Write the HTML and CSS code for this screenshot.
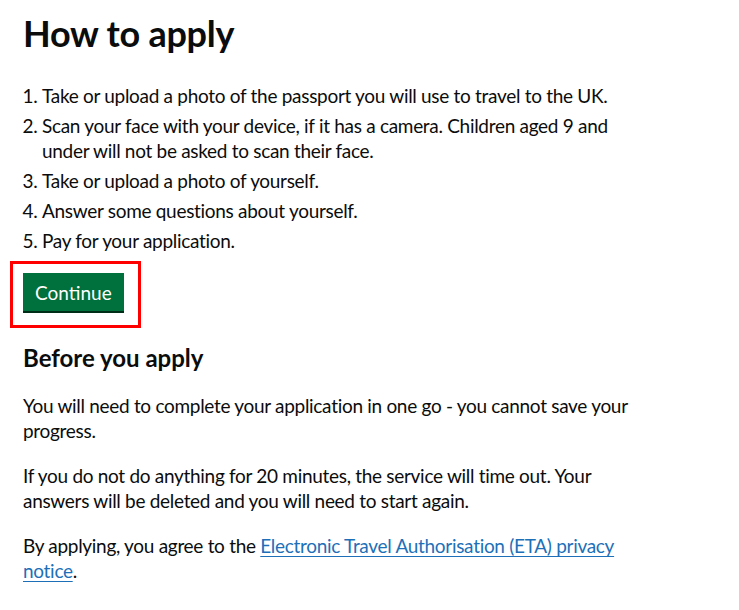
FILE: index.html
```html
<!DOCTYPE html>
<html lang="en">
<head>
<meta charset="utf-8">
<title>How to apply</title>
<link rel="stylesheet" href="styles.css">
</head>
<body>
<main class="page">
  <h1 class="heading-xl">How to apply</h1>
  <ol class="steps">
    <li>Take or upload a photo of the passport you will use to travel to the UK.</li>
    <li>Scan your face with your device, if it has a camera. Children aged 9 and under will not be asked to scan their face.</li>
    <li>Take or upload a photo of yourself.</li>
    <li>Answer some questions about yourself.</li>
    <li>Pay for your application.</li>
  </ol>
  <div class="highlight">
    <button class="button" type="button">Continue</button>
  </div>
  <h2 class="heading-m">Before you apply</h2>
  <p class="body">You will need to complete your application in one go - you cannot save your progress.</p>
  <p class="body">If you do not do anything for 20 minutes, the service will time out. Your answers will be deleted and you will need to start again.</p>
  <p class="body">By applying, you agree to the <a class="link" href="#">Electronic Travel Authorisation (ETA) privacy notice</a>.</p>
</main>
</body>
</html>
```

FILE: styles.css
```css
html, body {
  margin: 0;
  padding: 0;
  background: #ffffff;
}
body {
  font-family: Lato, "Liberation Sans", Arial, sans-serif;
  color: #0b0c0c;
  -webkit-font-smoothing: antialiased;
}
.page {
  padding: 13px 0 0 23px;
  width: 630px;
}
.heading-xl {
  font-size: 36px;
  line-height: 40px;
  font-weight: 700;
  letter-spacing: -0.25px;
  margin: 0 0 30px;
}
.steps {
  margin: 0;
  padding: 0 0 0 19px;
  font-size: 19px;
  line-height: 25px;
  letter-spacing: -0.3px;
}
.steps li {
  margin-bottom: 5px;
  padding-left: 0;
}
.highlight {
  display: inline-block;
  border: 3px solid #ff0000;
  padding: 9px 14px 12px 10px;
  margin: 3px 0 15px -13px;
}
.button {
  display: block;
  font-family: inherit;
  font-size: 19px;
  line-height: 19px;
  font-weight: 400;
  color: #ffffff;
  background: #00703c;
  border: 2px solid transparent;
  border-radius: 0;
  box-shadow: 0 2px 0 #002d18;
  padding: 8px 10px 7px;
  margin: 0 0 2px;
  cursor: pointer;
}
.heading-m {
  font-size: 24px;
  line-height: 30px;
  font-weight: 700;
  margin: 0 0 20px;
}
.body {
  font-size: 19px;
  line-height: 25px;
  letter-spacing: -0.3px;
  margin: 0 0 20px;
}
.link {
  color: #1d70b8;
  text-decoration: underline;
  text-decoration-thickness: 1px;
  text-underline-offset: 0.15em;
}
```
